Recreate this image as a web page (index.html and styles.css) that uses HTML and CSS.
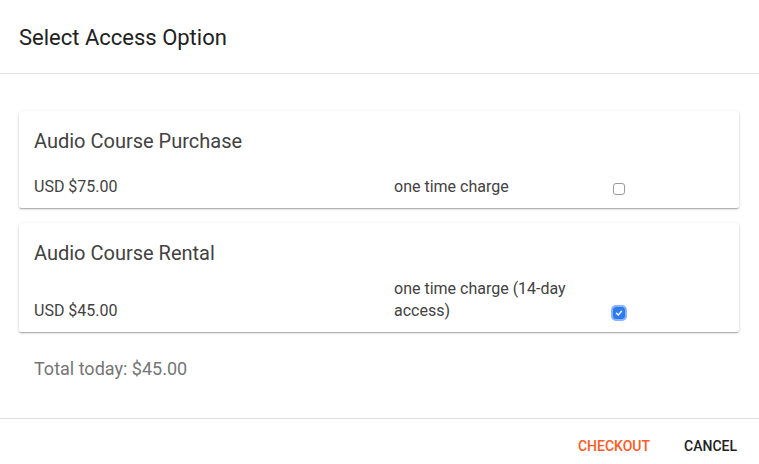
FILE: index.html
```html
<!DOCTYPE html>
<html lang="en">
<head>
<meta charset="utf-8">
<title>Select Access Option</title>
<link rel="stylesheet" href="styles.css">
</head>
<body>
<div class="dialog">
  <header class="dialog-header">
    <h1 class="dialog-title">Select Access Option</h1>
  </header>
  <main class="dialog-body">
    <section class="option-card">
      <h2 class="option-title">Audio Course Purchase</h2>
      <div class="option-row">
        <span class="option-price">USD $75.00</span>
        <span class="option-desc">one time charge</span>
        <span class="check"></span>
      </div>
    </section>
    <section class="option-card">
      <h2 class="option-title">Audio Course Rental</h2>
      <div class="option-row">
        <span class="option-price">USD $45.00</span>
        <span class="option-desc">one time charge (14-day access)</span>
        <span class="check checked">
          <svg viewBox="0 0 12 12" width="12" height="12"><path d="M3 6.3 L5.1 8.3 L9 3.8" fill="none" stroke="#fff" stroke-width="1.7" stroke-linecap="round" stroke-linejoin="round"/></svg>
        </span>
      </div>
    </section>
    <p class="total">Total today: $45.00</p>
  </main>
  <footer class="dialog-actions">
    <button class="btn btn-primary">Checkout</button>
    <button class="btn">Cancel</button>
  </footer>
</div>
</body>
</html>
```

FILE: styles.css
```css
* { box-sizing: border-box; }
html, body { margin: 0; padding: 0; background: #fff; }
body {
  font-family: Roboto, "Liberation Sans", Arial, sans-serif;
  color: #212121;
}
.dialog {
  display: flex;
  flex-direction: column;
  height: 464px;
  width: 759px;
}
.dialog-header {
  height: 74px;
  padding: 0 19px;
  display: flex;
  align-items: center;
  border-bottom: 1px solid #e0e0e0;
}
.dialog-title {
  margin: 2px 0 0 0;
  font-size: 22px;
  font-weight: 400;
  line-height: 28px;
  color: #212121;
}
.dialog-body {
  flex: 1;
  padding: 37px 20px 0 19px;
}
.option-card {
  background: #fff;
  border-radius: 2px;
  box-shadow: 0 1px 3px rgba(0,0,0,0.2), 0 1px 1px rgba(0,0,0,0.12), 0 2px 1px -1px rgba(0,0,0,0.1);
  padding: 15px 15px 10px 15px;
  margin-bottom: 15px;
}
.option-title {
  margin: 0;
  font-size: 20px;
  font-weight: 400;
  line-height: 30px;
  color: #424242;
}
.option-row {
  margin-top: 10px;
  min-height: 32px;
  display: grid;
  grid-template-columns: 360px 215px auto;
  align-items: end;
  font-size: 16px;
  line-height: 22px;
  color: #424242;
}
.check {
  display: inline-flex;
  align-items: center;
  justify-content: center;
  width: 12px;
  height: 12px;
  margin: 0 0 3px 4px;
  border: 1px solid #9a9a9a;
  border-radius: 3px;
  background: #fff;
}
.check.checked {
  border-color: #2a78f0;
  background: #2f7df6;
  box-shadow: 0 0 0 2px rgba(95, 155, 250, 0.75);
  margin-bottom: 3px;
}
.check svg { display: block; }
.total {
  margin: 25px 0 0 15px;
  font-size: 18px;
  line-height: 24px;
  color: #757575;
}
.dialog-actions {
  height: 46px;
  border-top: 1px solid #e0e0e0;
  display: flex;
  justify-content: flex-end;
  align-items: flex-start;
  gap: 18px;
  padding: 9px 14px 0 0;
}
.btn {
  height: 36px;
  padding: 0 8px;
  border: 0;
  background: transparent;
  font-family: Roboto, "Liberation Sans", Arial, sans-serif;
  font-size: 14px;
  font-weight: 500;
  text-transform: uppercase;
  color: #212121;
  cursor: pointer;
}
.btn-primary { color: #ff5a1f; }
```
